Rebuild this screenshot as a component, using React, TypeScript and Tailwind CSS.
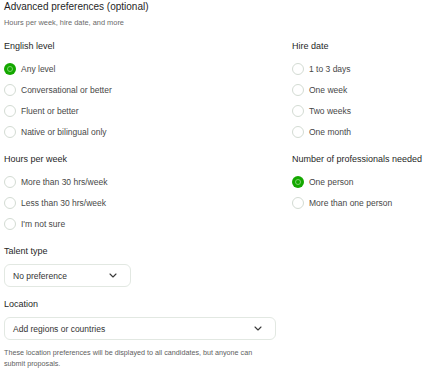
import React from "react";

function Radio({ label, checked }: { label: string; checked?: boolean }) {
  return (
    <div className="flex h-[21px] items-center gap-[5px]">
      {checked ? (
        <span className="flex h-[12px] w-[12px] items-center justify-center rounded-full bg-[#14a800]">
          <span className="h-[6px] w-[6px] rounded-full border border-[#7fd26f]" />
        </span>
      ) : (
        <span className="h-[12px] w-[12px] rounded-full border border-[#d3dbd3] bg-white" />
      )}
      <span className="text-[8.5px] leading-[12px] text-[#474747]">{label}</span>
    </div>
  );
}

function Section({
  title,
  options,
  checked,
  className = "",
}: {
  title: string;
  options: string[];
  checked?: number;
  className?: string;
}) {
  return (
    <div className={className}>
      <div className="h-[12px] text-[9px] leading-[12px] text-[#1f1f1f]">{title}</div>
      <div className="mt-[6px] flex flex-col">
        {options.map((o, i) => (
          <Radio key={o} label={o} checked={checked === i} />
        ))}
      </div>
    </div>
  );
}

function Chevron() {
  return (
    <svg width="8" height="5" viewBox="0 0 8 5" fill="none">
      <path d="M1 1L4 4L7 1" stroke="#3a3a3a" strokeWidth="1.1" strokeLinecap="round" strokeLinejoin="round" />
    </svg>
  );
}

function SelectBox({ text, width }: { text: string; width: string }) {
  return (
    <div
      className={`flex h-[23px] items-center justify-between rounded-[6px] border border-[#e2e8e2] bg-white pl-[8px] pr-[13px] ${width}`}
    >
      <span className="text-[8.5px] leading-[12px] text-[#333333]">{text}</span>
      <Chevron />
    </div>
  );
}

export default function App() {
  return (
    <div
      className="h-[372px] w-[430px] overflow-hidden bg-white pl-[4px]"
      style={{ fontFamily: '"Liberation Sans", Arial, sans-serif' }}
    >
      <div className="h-[14px] text-[10px] leading-[14px] text-[#1f1f1f]">Advanced preferences (optional)</div>
      <div className="mt-[4px] h-[9px] text-[7.4px] leading-[9px] text-[#6a6a6a]">
        Hours per week, hire date, and more
      </div>

      <div className="mt-[13px] grid grid-cols-[288px_1fr] gap-y-[11px]">
        <Section
          title="English level"
          options={["Any level", "Conversational or better", "Fluent or better", "Native or bilingual only"]}
          checked={0}
        />
        <Section title="Hire date" options={["1 to 3 days", "One week", "Two weeks", "One month"]} />
        <Section
          title="Hours per week"
          options={["More than 30 hrs/week", "Less than 30 hrs/week", "I'm not sure"]}
        />
        <Section
          title="Number of professionals needed"
          options={["One person", "More than one person"]}
          checked={0}
        />
      </div>

      <div className="mt-[11px] h-[12px] text-[9px] leading-[12px] text-[#1f1f1f]">Talent type</div>
      <div className="mt-[7px]">
        <SelectBox text="No preference" width="w-[127px]" />
      </div>

      <div className="mt-[11px] h-[12px] text-[9px] leading-[12px] text-[#1f1f1f]">Location</div>
      <div className="mt-[7px]">
        <SelectBox text="Add regions or countries" width="w-[272px]" />
      </div>
      <div className="mt-[7px] w-[255px] text-[7.2px] leading-[11px] text-[#5e5e5e]">
        These location preferences will be displayed to all candidates, but anyone can submit proposals.
      </div>
    </div>
  );
}
